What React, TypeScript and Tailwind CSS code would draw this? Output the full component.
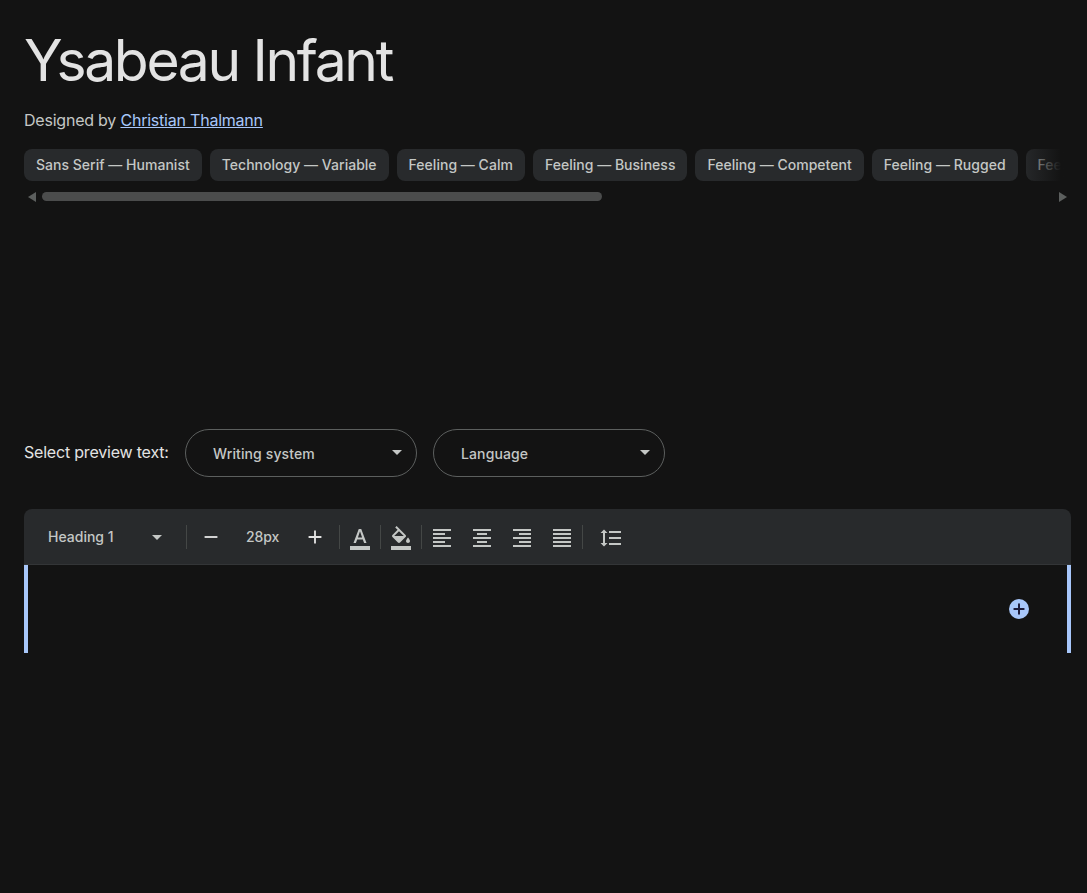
import { Plus } from 'lucide-react';
import {
  MdAdd,
  MdArrowDropDown,
  MdFormatAlignCenter,
  MdFormatAlignJustify,
  MdFormatAlignLeft,
  MdFormatAlignRight,
  MdFormatColorFill,
  MdFormatColorText,
  MdFormatLineSpacing,
  MdRemove,
} from 'react-icons/md';

const tags = [
  'Sans Serif — Humanist',
  'Technology — Variable',
  'Feeling — Calm',
  'Feeling — Business',
  'Feeling — Competent',
  'Feeling — Rugged',
  'Feeling — Sincere',
];

function Divider() {
  return <div className="h-6 w-px shrink-0 bg-[#444746]" />;
}

function ToolIcon({ children }: { children: React.ReactNode }) {
  return <div className="flex h-10 w-10 items-center justify-center pt-0.5 text-[#c4c7c5]">{children}</div>;
}

function PreviewSelect({ label }: { label: string }) {
  return (
    <div className="flex h-12 w-[232px] items-center justify-between rounded-3xl border border-[#5c5f5e] pr-[7px] pl-[27px] text-[#c4c7c5]">
      <span className="pt-0.5 text-sm font-medium tracking-[0.12px]">{label}</span>
      <MdArrowDropDown size={24} className="-mt-0.5" />
    </div>
  );
}

export default function App() {
  return (
    <div className="min-h-[893px] bg-[#131313] pr-4 pl-6 text-[#e3e3e3] [font-family:Inter,'Liberation_Sans',sans-serif]">
      <h1 className="pt-[25px] text-[57px] leading-[72px] font-normal tracking-[-2.35px] text-[#e3e3e3]">
        Ysabeau Infant
      </h1>
      <p className="mt-[11px] text-base leading-6 tracking-[-0.22px] text-[#c4c7c5]">
        Designed by <a className="text-[#a8c7fa] underline">Christian Thalmann</a>
      </p>

      <div className="relative mt-[17px] overflow-hidden">
        <div className="flex gap-2">
          {tags.map((tag) => (
            <span
              key={tag}
              className="flex h-8 shrink-0 items-center rounded-lg bg-[#282a2c] px-3 text-sm font-medium tracking-[0.02px] whitespace-nowrap text-[#c4c7c5]"
            >
              {tag}
            </span>
          ))}
        </div>
        <div className="absolute top-0 right-0 h-8 w-[50px] bg-gradient-to-r from-transparent to-[#131313] to-80%" />
      </div>

      <div className="mt-[11px] flex h-[9px] items-center text-[#5c5f5e]">
        <div className="ml-1 h-0 w-0 border-y-[5px] border-r-[8px] border-y-transparent border-r-current" />
        <div className="ml-1.5 h-[9px] w-[560px] rounded-full bg-[#4b4c4c]" />
        <div className="mr-1 ml-auto h-0 w-0 border-y-[5px] border-l-[8px] border-y-transparent border-l-current" />
      </div>

      <div className="mt-[228px] flex items-center gap-4">
        <span className="w-[145px] -translate-y-px text-base tracking-[-0.2px] whitespace-nowrap text-[#e3e3e3]">
          Select preview text:
        </span>
        <PreviewSelect label="Writing system" />
        <PreviewSelect label="Language" />
      </div>

      <div className="mt-8 flex h-14 items-center rounded-t-lg border-b border-[#333537] bg-[#282a2c] pl-6 text-[#c4c7c5]">
        <div className="flex w-[138px] items-center justify-between pr-[17px]">
          <span className="text-sm font-medium">Heading 1</span>
          <MdArrowDropDown size={24} />
        </div>
        <Divider />
        <div className="flex w-[59px] justify-center pr-[11px]">
          <MdRemove size={22} className="text-[#e3e3e3]" />
        </div>
        <span className="w-[33px] text-sm font-medium tracking-[-0.1px] whitespace-nowrap">28px</span>
        <div className="ml-6 flex w-6 justify-center">
          <MdAdd size={22} className="text-[#e3e3e3]" />
        </div>
        <div className="ml-3">
          <Divider />
        </div>
        <ToolIcon>
          <MdFormatColorText size={24} />
        </ToolIcon>
        <Divider />
        <ToolIcon>
          <MdFormatColorFill size={24} />
        </ToolIcon>
        <Divider />
        <ToolIcon>
          <MdFormatAlignLeft size={24} />
        </ToolIcon>
        <ToolIcon>
          <MdFormatAlignCenter size={24} />
        </ToolIcon>
        <ToolIcon>
          <MdFormatAlignRight size={24} />
        </ToolIcon>
        <ToolIcon>
          <MdFormatAlignJustify size={24} />
        </ToolIcon>
        <Divider />
        <div className="ml-2">
          <ToolIcon>
            <MdFormatLineSpacing size={24} />
          </ToolIcon>
        </div>
      </div>

      <div className="flex h-[88px] items-start justify-end border-x-4 border-[#a8c7fa] pt-[34px] pr-[38px]">
        <div className="flex h-5 w-5 items-center justify-center rounded-full bg-[#a8c7fa] text-[#1c1b3a]">
          <Plus size={16} strokeWidth={3} />
        </div>
      </div>
    </div>
  );
}
